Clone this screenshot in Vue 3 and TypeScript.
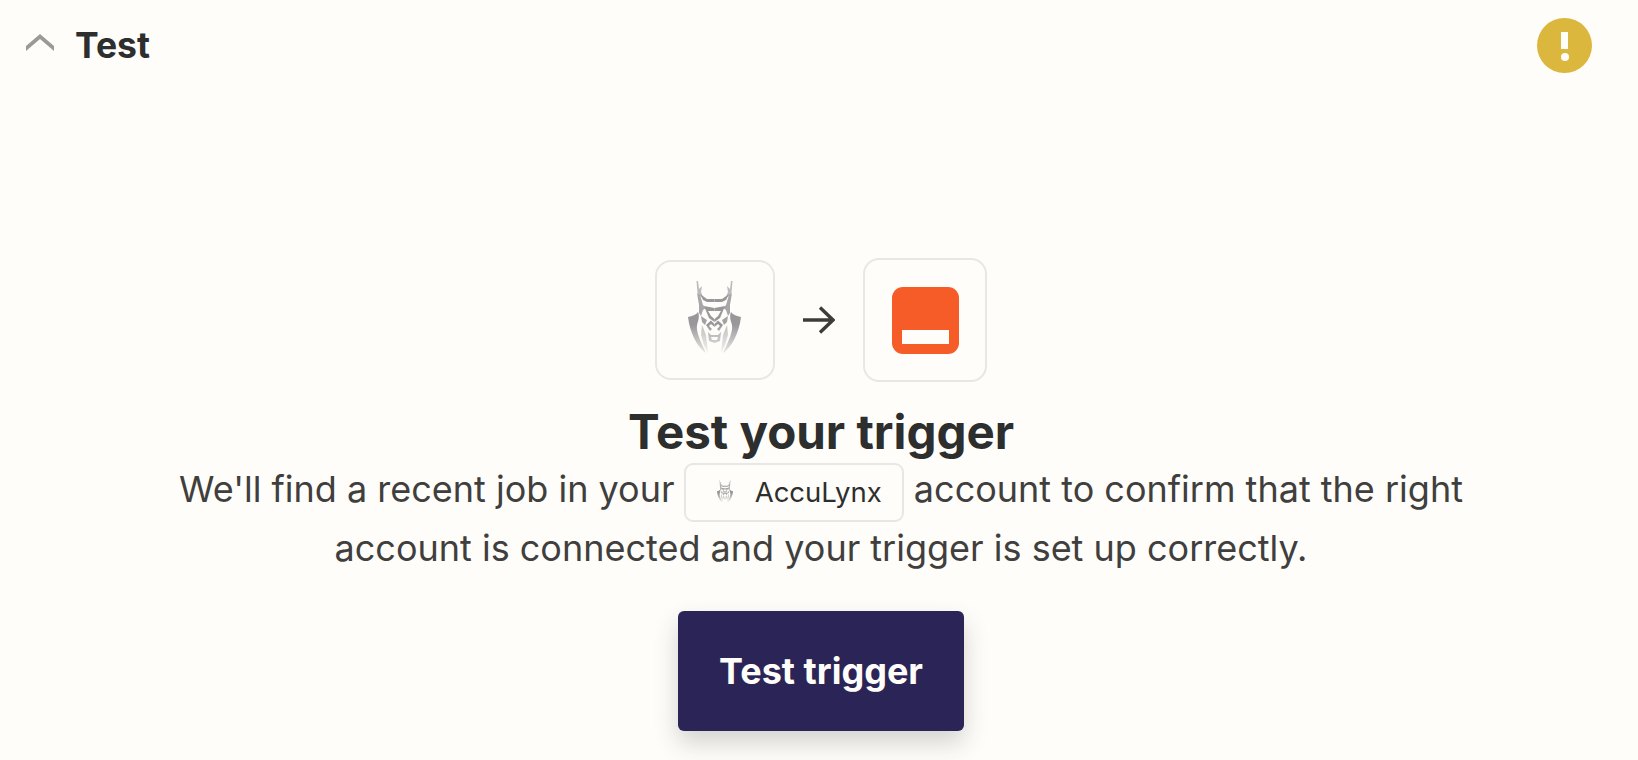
<script setup lang="ts">
const lynxHalf: { d: string; o: number }[] = [
  { d: 'M26.5 6 L28 6 L29 14 L32 11 L31 17 L33 22 L31 22 L27.5 18 Z', o: 0.65 },
  { d: 'M30 19 L37 24 L44.5 24 L44.5 27 L37 27 L33 25 Z', o: 1 },
  { d: 'M27 18 L30 20 L33 30 L36 33 L33 35 L31 41 L29 38 L29 30 Z', o: 0.85 },
  { d: 'M18 42 C22 41 26 40 28 37 C30 42 28 46 27 50 C26 57 30 65 36 78 C27 72 20 58 18 42 Z', o: 1 },
  { d: 'M31 41 L37 45 L35 50 L32 47 Z', o: 0.9 },
  { d: 'M34 31 L44.5 33 L44.5 36 L38 36 L41 41 L44.5 44 L44.5 47 L39 43 Z', o: 1 },
  { d: 'M36 50 L41 45.5 L44.5 49 L44.5 52 L41 49 L39 51 L42 54 L40 56 Z', o: 1 },
  { d: 'M38 57 L41 60 L44.5 60 L44.5 62 L41 62 L42 65 L44.5 65 L44.5 68 L39 66 Z', o: 0.9 },
  { d: 'M32 50 L36 60 L38 78 L34 70 L31 60 Z', o: 0.6 }
]
</script>

<template>
  <div class="page">
    <header class="header">
      <div class="title-group">
        <svg class="chevron" viewBox="0 0 28 17" aria-hidden="true">
          <path d="M0 12 L14 0 L28 12 V17 L14 5 L0 17 Z" />
        </svg>
        <span class="title">Test</span>
      </div>
      <div class="alert" aria-label="Warning">
        <span class="alert-bar"></span>
        <span class="alert-dot"></span>
      </div>
    </header>

    <main class="main">
      <div class="icons">
        <div class="tile tile-left">
          <svg class="lynx" viewBox="0 0 90 90" aria-hidden="true">
            <defs>
              <linearGradient id="lynx-fade" gradientUnits="userSpaceOnUse" x1="0" y1="50" x2="0" y2="82">
                <stop offset="0" stop-color="#98989b" />
                <stop offset="1" stop-color="#98989b" stop-opacity="0.1" />
              </linearGradient>
            </defs>
            <g v-for="m in [false, true]" :key="String(m)" :transform="m ? 'matrix(-1 0 0 1 89 0)' : undefined">
              <path v-for="p in lynxHalf" :key="p.d" :d="p.d" :opacity="p.o" fill="url(#lynx-fade)" />
            </g>
          </svg>
        </div>
        <svg class="arrow" viewBox="0 0 32 28" aria-hidden="true">
          <path d="M0 14 H29 M17 1.5 L30 14 L17 26.5" />
        </svg>
        <div class="tile tile-right">
          <div class="orange"><span class="orange-bar"></span></div>
        </div>
      </div>

      <h1 class="heading">Test your trigger</h1>
      <p class="body">
        We'll find a recent job in your
        <span class="pill">
          <svg class="lynx-small" viewBox="12 2 65 85" aria-hidden="true">
            <g v-for="m in [false, true]" :key="String(m)" :transform="m ? 'matrix(-1 0 0 1 89 0)' : undefined">
              <path v-for="p in lynxHalf" :key="p.d" :d="p.d" :opacity="p.o" fill="url(#lynx-fade)" />
            </g>
          </svg>
          AccuLynx
        </span>
        account to confirm that the right account is connected and your trigger is set up correctly.
      </p>
      <button class="cta" type="button">Test trigger</button>
    </main>
  </div>
</template>

<style>
html,
body {
  margin: 0;
  background: #fffdf9;
}
</style>

<style scoped>
.page {
  height: 760px;
  overflow: hidden;
  background: #fffdf9;
  font-family: Inter, "Liberation Sans", sans-serif;
  color: #2d2e2e;
}
.header {
  display: flex;
  justify-content: space-between;
  align-items: center;
  height: 90px;
  padding: 0 46px 0 26px;
}
.title-group {
  display: flex;
  align-items: center;
  gap: 21px;
}
.chevron {
  width: 28px;
  height: 17px;
  margin-bottom: 5px;
  fill: #9b9a97;
}
.title {
  font-size: 35.5px;
  font-weight: 700;
  line-height: 40px;
  padding-top: 1px;
}
.alert {
  box-sizing: border-box;
  width: 55px;
  height: 55px;
  padding-top: 2px;
  border-radius: 50%;
  background: #dcb73d;
  display: flex;
  flex-direction: column;
  align-items: center;
  justify-content: center;
  gap: 4px;
}
.alert-bar {
  width: 7px;
  height: 17px;
  background: #fffdf9;
}
.alert-dot {
  width: 8px;
  height: 8px;
  border-radius: 50%;
  background: #fffdf9;
}
.main {
  display: flex;
  flex-direction: column;
  align-items: center;
  padding: 168px 0 0 4px;
}
.icons {
  display: flex;
  align-items: center;
  gap: 28px;
}
.tile {
  box-sizing: border-box;
  display: flex;
  align-items: center;
  justify-content: center;
  border: 2px solid #e7e7e4;
  border-radius: 16px;
}
.tile-left {
  width: 120px;
  height: 120px;
}
.tile-right {
  width: 124px;
  height: 124px;
}
.lynx {
  width: 90px;
  height: 90px;
}
.arrow {
  width: 32px;
  height: 28px;
  fill: none;
  stroke: #3d3c3b;
  stroke-width: 3.4;
}
.orange {
  position: relative;
  width: 67px;
  height: 67px;
  border-radius: 11px;
  background: #f55c27;
}
.orange-bar {
  position: absolute;
  left: 10px;
  bottom: 10px;
  width: 47px;
  height: 14px;
  background: #fffdf9;
}
.heading {
  margin: 21px 0 0;
  font-size: 47.5px;
  line-height: 58px;
  font-weight: 700;
  color: #2d2e2e;
}
.body {
  margin: 0;
  width: 1320px;
  text-align: center;
  font-size: 36px;
  line-height: 56px;
  color: #403f3e;
}
.pill {
  box-sizing: border-box;
  display: inline-flex;
  align-items: center;
  gap: 20px;
  height: 59px;
  padding: 0 20px 0 29px;
  margin: -2px 0 -2px -1px;
  vertical-align: middle;
  border: 2px solid #e7e7e4;
  border-radius: 9px;
  font-size: 27.5px;
  color: #2d2e2e;
}
.lynx-small {
  width: 20px;
  height: 26px;
}
.cta {
  width: 286px;
  height: 120px;
  margin-top: 35px;
  border: 0;
  border-radius: 6px;
  background: #2b2557;
  color: #fffdf9;
  font-family: inherit;
  font-size: 36px;
  font-weight: 700;
  box-shadow: 0 12px 24px rgba(45, 46, 46, 0.2);
}
</style>
